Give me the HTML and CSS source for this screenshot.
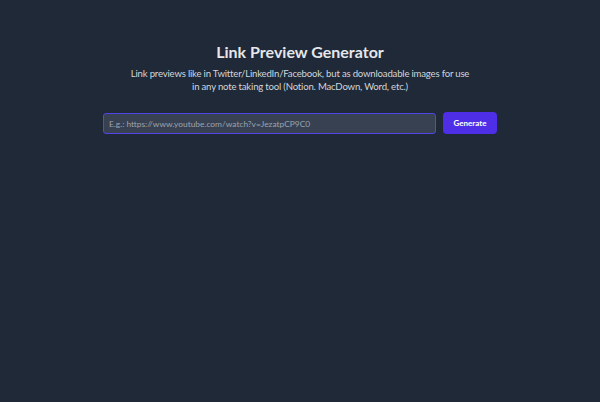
FILE: index.html
```html
<!DOCTYPE html>
<html>
<head>
<meta charset="utf-8">
<link rel="stylesheet" href="styles.css">
</head>
<body>
<main class="page">
  <h1 class="title">Link Preview Generator</h1>
  <p class="subtitle">Link previews like in Twitter/LinkedIn/Facebook, but as downloadable images for use<br>in any note taking tool (Notion. MacDown, Word, etc.)</p>
  <form class="form">
    <input class="url" type="text" placeholder="E.g.: https://www.youtube.com/watch?v=JezatpCP9C0">
    <button class="btn" type="button">Generate</button>
  </form>
</main>
</body>
</html>
```
FILE: styles.css
```css
html, body {
  margin: 0;
  height: 100%;
  background: #1f2937;
}
body {
  font-family: Lato, "Noto Sans", sans-serif;
  color: #e5e7eb;
}
.page {
  display: flex;
  flex-direction: column;
  align-items: center;
  padding-top: 42px;
}
.title {
  margin: 0;
  font-size: 16px;
  font-weight: 700;
  line-height: 20px;
  color: #e5e7eb;
}
.subtitle {
  margin: 5px 0 0;
  font-size: 9.6px;
  letter-spacing: -0.2px;
  line-height: 13px;
  text-align: center;
  color: #d1d5db;
}
.form {
  display: flex;
  gap: 7px;
  width: 394px;
  margin-top: 19px;
}
.url {
  flex: 1;
  height: 21px;
  box-sizing: border-box;
  margin-top: 1px;
  padding: 0 5px;
  background: #374151;
  border: 1px solid #4f46e5;
  border-radius: 3px;
  color: #e5e7eb;
  font-family: inherit;
  font-size: 8.4px;
  outline: none;
}
.url::placeholder {
  color: #9ca3af;
}
.btn {
  width: 54px;
  height: 22px;
  background: #4f2ee8;
  border: none;
  border-radius: 4px;
  color: #ffffff;
  font-family: inherit;
  font-size: 8px;
  font-weight: 700;
  padding: 0;
}
```
